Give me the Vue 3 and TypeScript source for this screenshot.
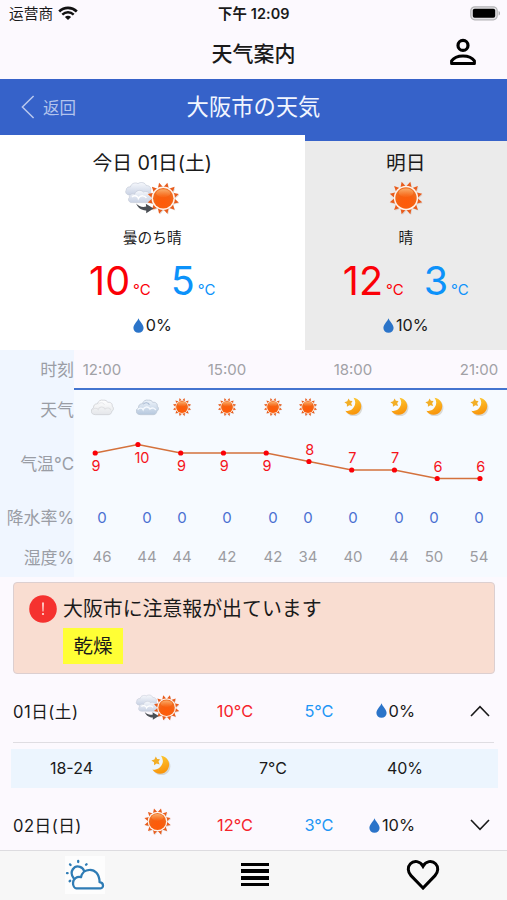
<script setup lang="ts">
type IconName = 'sun' | 'moon' | 'cloud' | 'overcast' | 'cloud-sun'

interface DaySummary {
  id: string
  title: string
  icon: IconName
  condition: string
  high: number
  low: number
  rain: string
}

interface HourSlot {
  icon: IconName
  rain: number
  humidity: number
  time?: string
}

interface TempPoint {
  x: number
  y: number
  value: number
  labelX: number
  labelY: number
}

interface DayRow {
  date: string
  icon: IconName
  high: string
  low: string
  rain: string
  open: boolean
  parts: { range: string; icon: IconName; temp: string; humidity: string }[]
}

const boxes: Record<IconName, string> = {
  sun: '0 0 36 36',
  moon: '0 0 20 20',
  cloud: '0 0 26 20',
  overcast: '0 0 26 20',
  'cloud-sun': '0 0 58 36',
}

const days: DaySummary[] = [
  { id: 'today', title: '今日 01日(土)', icon: 'cloud-sun', condition: '曇のち晴', high: 10, low: 5, rain: '0%' },
  { id: 'tomorrow', title: '明日', icon: 'sun', condition: '晴', high: 12, low: 3, rain: '10%' },
]

const hours: HourSlot[] = [
  { time: '12:00', icon: 'cloud', rain: 0, humidity: 46 },
  { icon: 'overcast', rain: 0, humidity: 44 },
  { icon: 'sun', rain: 0, humidity: 44 },
  { time: '15:00', icon: 'sun', rain: 0, humidity: 42 },
  { icon: 'sun', rain: 0, humidity: 42 },
  { icon: 'sun', rain: 0, humidity: 34 },
  { time: '18:00', icon: 'moon', rain: 0, humidity: 40 },
  { icon: 'moon', rain: 0, humidity: 44 },
  { icon: 'moon', rain: 0, humidity: 50 },
  { time: '21:00', icon: 'moon', rain: 0, humidity: 54 },
]

const temps = [9, 10, 9, 9, 9, 8, 7, 7, 6, 6]

// A label sits under its point while the curve is high and over it once it falls.
const points: TempPoint[] = temps.map((value, i) => {
  const x = 21.2 + i * 42.75
  const y = 23 + (9 - value) * 8.5
  return { x, y, value, labelX: x + (value === 10 ? 4 : 0.7), labelY: value >= 9 ? y + 18.3 : y - 7 }
})
const line = points.map((p) => `${p.x},${p.y}`).join(' ')

const rows: DayRow[] = [
  {
    date: '01日(土)',
    icon: 'cloud-sun',
    high: '10°C',
    low: '5°C',
    rain: '0%',
    open: true,
    parts: [{ range: '18-24', icon: 'moon', temp: '7°C', humidity: '40%' }],
  },
  { date: '02日(日)', icon: 'sun', high: '12°C', low: '3°C', rain: '10%', open: false, parts: [] },
]

const rays = Array.from({ length: 12 }, (_, i) => i * 30)
</script>

<template>
  <div class="screen">
    <svg class="sprite" aria-hidden="true">
      <defs>
        <radialGradient id="sun-fill" cx="0.5" cy="0.72" r="0.62">
          <stop offset="0" stop-color="#ff5a08" />
          <stop offset="0.6" stop-color="#f76010" />
          <stop offset="1" stop-color="#ef6f24" />
        </radialGradient>
        <linearGradient id="sun-gloss" x1="0" y1="0" x2="0" y2="1">
          <stop offset="0" stop-color="#ffc080" stop-opacity="0.75" />
          <stop offset="1" stop-color="#ff9a50" stop-opacity="0.1" />
        </linearGradient>
        <linearGradient id="moon-fill" x1="0" y1="0" x2="0.3" y2="1">
          <stop offset="0" stop-color="#fdd037" />
          <stop offset="1" stop-color="#f9960c" />
        </linearGradient>
        <linearGradient id="cloud-fill" x1="0" y1="0" x2="0" y2="1">
          <stop offset="0" stop-color="#ffffff" />
          <stop offset="1" stop-color="#e4e6ea" />
        </linearGradient>
        <linearGradient id="overcast-fill" x1="0" y1="0" x2="0" y2="1">
          <stop offset="0" stop-color="#eef4fb" />
          <stop offset="1" stop-color="#b6c8de" />
        </linearGradient>
        <linearGradient id="puff-fill" x1="0" y1="0" x2="0" y2="1">
          <stop offset="0" stop-color="#f6f8fc" />
          <stop offset="1" stop-color="#c9d2e4" />
        </linearGradient>
      </defs>
      <symbol id="sun" viewBox="0 0 36 36">
        <g fill="#c9bfba" opacity="0.55" transform="translate(0.9 1.1)">
          <path v-for="a in rays" :key="a" d="M18 1.6 20.6 7.2 15.4 7.2Z" :transform="`rotate(${a + 15} 18 18)`" />
        </g>
        <circle cx="18.4" cy="18.5" r="12.5" fill="#dccfc8" opacity="0.7" />
        <path v-for="a in rays" :key="a" d="M18 1.2 20.9 7 15.1 7Z" fill="#e85c1c" :transform="`rotate(${a + 15} 18 18)`" />
        <circle cx="18" cy="18" r="12.2" fill="#fff3ea" />
        <circle cx="18" cy="18" r="10.7" fill="url(#sun-fill)" />
        <ellipse cx="18" cy="12.8" rx="7.4" ry="4.2" fill="url(#sun-gloss)" />
      </symbol>
      <symbol id="moon" viewBox="0 0 20 20">
        <path d="M10.8 1.6A9 9 0 1 1 2.2 14.7 8.6 8.6 0 0 0 10.8 1.6Z" fill="#b9b3a6" opacity="0.45" transform="translate(0.2 0.7)" />
        <path d="M10 0.8A9 9 0 1 1 1.4 14.4 8.6 8.6 0 0 0 10 0.8Z" fill="url(#moon-fill)" />
        <path d="M4.8 1.5 6.2 4 9 4.2 7.5 6.6 8.6 9.4 5.6 8.6 3.1 10.3 3 7.3 0.4 5.6 3.4 4.5Z" fill="#f2ae26" />
      </symbol>
      <symbol id="cloud" viewBox="0 0 26 20">
        <path d="M5.4 17.5C2.4 17.5 1 15.6 1.4 13.9 1.2 12 2.4 10.8 3.6 10.4 3.2 7.6 5.4 5.8 7.6 6.2 8.4 3.2 11 1.6 13.8 2.3 16.4 2 18 3.2 18.5 4.6 21.4 4 23.8 6 23.2 8.6 25.3 10.4 24.7 13 22.9 13.7 22.7 16.4 20.9 17.6 19 17.5Z" fill="url(#cloud-fill)" stroke="#d3d5d9" stroke-width="1" />
        <path d="M2.6 12.2C4.8 9.8 7.6 10.6 8.4 12.2 9.6 8.8 14 8.4 15.6 11.6 18 9.6 21 10.6 21.6 12.8" fill="none" stroke="#dfe0e3" stroke-width="1.1" />
        <path d="M8.5 6.6C10.4 4.2 14 4.6 15 7.2" fill="none" stroke="#e2e3e6" stroke-width="0.9" />
      </symbol>
      <symbol id="overcast" viewBox="0 0 26 20">
        <path d="M5.4 17.5C2.4 17.5 1 15.6 1.4 13.9 1.2 12 2.4 10.8 3.6 10.4 3.2 7.6 5.4 5.8 7.6 6.2 8.4 3.2 11 1.6 13.8 2.3 16.4 2 18 3.2 18.5 4.6 21.4 4 23.8 6 23.2 8.6 25.3 10.4 24.7 13 22.9 13.7 22.7 16.4 20.9 17.6 19 17.5Z" fill="url(#overcast-fill)" stroke="#c0cad8" stroke-width="1" />
        <path d="M2.6 12.2C4.8 9.8 7.6 10.6 8.4 12.2 9.6 8.8 14 8.4 15.6 11.6 18 9.6 21 10.6 21.6 12.8" fill="none" stroke="#f5f9fe" stroke-width="1.5" />
        <path d="M8.5 6.6C10.4 4.2 14 4.6 15 7.2" fill="none" stroke="#a9bad2" stroke-width="1.2" />
      </symbol>
      <symbol id="cloud-sun" viewBox="0 0 58 36">
        <g stroke="#c6ccd8" stroke-width="0.7">
          <path d="M8 14C4.4 14 3 11 4.4 9.2 4.4 6.6 6.8 5.4 8.6 6 9.2 2.6 13.2 1 16.2 2.6 19 0.6 23.4 1.4 24.4 4.6 28 4.2 30 7.4 28.6 10 30 12.4 28 14.4 26 14Z" fill="url(#puff-fill)" transform="translate(-1.2 1)" />
          <path d="M9.6 22.6C5.8 22.8 4.4 19.4 6.4 17.4 6 14.4 9.4 13 11.6 14.2 12.4 10.4 17.8 9 20.4 12 23.6 10.6 27 12.4 27 15.4 30.4 15.6 31.6 22.4 27 22.6Z" fill="url(#puff-fill)" />
          <path d="M9 16.8C12 14.6 15 16.4 15.4 18.4 17.4 14.8 22 15.4 23.4 18" fill="none" stroke="#ffffff" stroke-width="1.5" />
        </g>
        <use href="#sun" x="23" y="1" width="34.5" height="34.5" />
        <path d="M13.2 23.6C16 26.8 19.6 27.4 23.2 26.6L22.8 23.8 30.6 28.4 23.2 33.2 23.2 30.4C18.4 30.6 14.8 27.8 13.2 23.6Z" fill="#4a4e54" />
      </symbol>
      <symbol id="drop" viewBox="0 0 11 15">
        <path d="M5.5 0.3C6.6 3.6 10.6 6.6 10.6 10A5.1 4.8 0 0 1 0.4 10C0.4 6.6 4.4 3.6 5.5 0.3Z" fill="#2b74c9" />
      </symbol>
    </svg>

    <div class="status">
      <span class="carrier">运营商</span>
      <svg class="wifi" viewBox="0 0 20 15">
        <path d="M1.2 5.4C6.2 0.7 13.8 0.7 18.8 5.4" fill="none" stroke="#111" stroke-width="2.7" />
        <path d="M4.3 8.6C7.6 5.6 12.4 5.6 15.7 8.6" fill="none" stroke="#111" stroke-width="2.5" />
        <path d="M10 14 6.9 10.9C8.7 9.4 11.3 9.4 13.1 10.9Z" fill="#111" />
      </svg>
      <span class="clock">下午 12:09</span>
      <svg class="battery" viewBox="0 0 31 15">
        <rect x="0.8" y="0.8" width="26.4" height="13" rx="4" fill="#e4e3e6" stroke="#b4b4b6" stroke-width="1.2" />
        <rect x="2.8" y="2.8" width="22.4" height="9" rx="1.8" fill="#000" />
        <path d="M28.6 5C30.4 5.6 30.4 9 28.6 9.6Z" fill="#a8a8aa" />
      </svg>
    </div>

    <header class="nav">
      <h1>天气案内</h1>
      <svg class="person" viewBox="0 0 28 28">
        <circle cx="14" cy="7.4" r="5" fill="none" stroke="#000" stroke-width="3.2" />
        <path d="M2.6 25.6V22.8C4.6 19.8 9 17.9 14 17.9S23.4 19.8 25.4 22.8V25.6Z" fill="none" stroke="#000" stroke-width="3" stroke-linejoin="round" />
      </svg>
    </header>

    <div class="city">
      <div class="back">
        <svg viewBox="0 0 14 24"><path d="M12.6 1 1.4 12 12.6 23" fill="none" stroke="#b9c8ee" stroke-width="1.5" /></svg>
        <span>返回</span>
      </div>
      <h2>大阪市の天気</h2>
    </div>

    <section class="days">
      <article v-for="d in days" :key="d.id" class="day" :class="d.id">
        <div class="day-title">{{ d.title }}</div>
        <svg class="day-icon" :class="d.icon" :viewBox="boxes[d.icon]"><use :href="`#${d.icon}`" /></svg>
        <div class="condition">{{ d.condition }}</div>
        <div class="range">
          <span class="temp high">{{ d.high }}<small>°C</small></span>
          <span class="temp low">{{ d.low }}<small>°C</small></span>
        </div>
        <div class="rain"><svg class="drop" viewBox="0 0 11 15"><use href="#drop" /></svg>{{ d.rain }}</div>
      </article>
    </section>

    <section class="hourly">
      <div class="labels">
        <span>时刻</span><span>天气</span><span>气温°C</span><span>降水率%</span><span>湿度%</span>
      </div>
      <div class="table">
        <div class="slots times">
          <span v-for="(h, i) in hours" :key="i">{{ h.time }}</span>
        </div>
        <div class="slots icons">
          <svg v-for="(h, i) in hours" :key="i" :class="h.icon" :viewBox="boxes[h.icon]"><use :href="`#${h.icon}`" /></svg>
        </div>
        <svg class="chart" viewBox="0 0 433 68">
          <polyline :points="line" fill="none" stroke="#d4713c" stroke-width="1.5" />
          <g v-for="(p, i) in points" :key="i">
            <circle :cx="p.x" :cy="p.y" r="2.6" fill="#fb0007" />
            <text :x="p.labelX" :y="p.labelY" text-anchor="middle">{{ p.value }}</text>
          </g>
        </svg>
        <div class="slots rains">
          <span v-for="(h, i) in hours" :key="i">{{ h.rain }}</span>
        </div>
        <div class="slots humidity">
          <span v-for="(h, i) in hours" :key="i">{{ h.humidity }}</span>
        </div>
      </div>
    </section>

    <section class="alert">
      <svg class="warn" viewBox="0 0 28 28">
        <circle cx="14" cy="14" r="13.8" fill="#f5322f" />
        <path d="M13.1 7.6H14.9L14.5 16.4H13.5Z" fill="#ffe3dd" />
        <circle cx="14" cy="19" r="1.1" fill="#ffe3dd" />
      </svg>
      <div class="alert-body">
        <p>大阪市に注意報が出ています</p>
        <span class="tag">乾燥</span>
      </div>
    </section>

    <section class="list">
      <template v-for="r in rows" :key="r.date">
        <div class="row" :class="{ open: r.open }">
          <span class="date">{{ r.date }}</span>
          <svg class="row-icon" :class="r.icon" :viewBox="boxes[r.icon]"><use :href="`#${r.icon}`" /></svg>
          <span class="hi">{{ r.high }}</span>
          <span class="lo">{{ r.low }}</span>
          <span class="pct"><svg class="drop" viewBox="0 0 11 15"><use href="#drop" /></svg>{{ r.rain }}</span>
          <svg class="chevron" viewBox="0 0 20 12">
            <path :d="r.open ? 'M1 11 10 1.6 19 11' : 'M1 1 10 10.4 19 1'" fill="none" stroke="#1a1a1a" stroke-width="1.6" />
          </svg>
        </div>
        <div v-for="p in r.parts" :key="p.range" class="part">
          <span>{{ p.range }}</span>
          <svg class="moon" :viewBox="boxes[p.icon]"><use :href="`#${p.icon}`" /></svg>
          <span>{{ p.temp }}</span>
          <span>{{ p.humidity }}</span>
        </div>
      </template>
    </section>

    <nav class="tabs">
      <div class="tab">
        <svg class="tab-weather" viewBox="0 0 40 38">
          <g fill="none" stroke="#2f7cb5" stroke-width="2.3" stroke-linecap="round" stroke-linejoin="round">
            <path d="M11.2 32.4H35.4C39 32.2 39 26.6 34.6 26.2 34.4 17.8 29.8 13.6 24.6 13.8 19.8 13.8 16.8 17.2 16 21.2 12 20 8 23 8 27 8 30 9.6 32.2 11.2 32.4Z" />
            <path d="M8.6 22C3.6 15.6 9.4 8.8 15 10.8 17.2 11.6 18.6 13.2 19 14.8" />
            <path d="M13.2 5V6M5 8.4 5.6 9M2 17.2H2.6M4.6 25.2 5.2 24.8M21 8.8 21.6 8.2" />
          </g>
        </svg>
      </div>
      <div class="tab"><div class="bars"><i></i><i></i><i></i><i></i></div></div>
      <div class="tab">
        <svg class="heart" viewBox="0 0 34 32">
          <path d="M17 29 5 16.6C1.6 13 1.4 7.8 4.4 4.8 8 1 14.2 2 17 7.2 19.8 2 26 1 29.6 4.8 32.6 7.8 32.4 13 29 16.6Z" fill="none" stroke="#000" stroke-width="3" />
        </svg>
      </div>
    </nav>
  </div>
</template>

<style>
body {
  margin: 0;
}
</style>

<style scoped>
.screen {
  display: flex;
  flex-direction: column;
  width: 507px;
  height: 900px;
  overflow: hidden;
  background: #fcf9fe;
  color: #1a1a1a;
  font-family: Inter, 'Noto Sans CJK JP', sans-serif;
  font-size: 16px;
}
.screen > * {
  flex: none;
}
.sprite {
  display: block;
  width: 0;
  height: 0;
}
svg {
  display: block;
  flex: none;
}
.status {
  display: grid;
  grid-template-columns: 49px 160px 91px 1fr 31px;
  align-items: center;
  height: 27px;
  padding: 0 6px 0 9px;
  box-sizing: border-box;
  font-family: Inter, 'Noto Sans CJK SC', sans-serif;
  font-size: 14.7px;
  line-height: 20px;
}
.carrier {
  white-space: nowrap;
}
.wifi {
  width: 20px;
  height: 15px;
}
.clock {
  font-size: 14.4px;
  font-weight: 600;
  letter-spacing: 0.1px;
  white-space: nowrap;
}
.battery {
  grid-column: 5;
  width: 31px;
  height: 15px;
}
.nav {
  display: grid;
  grid-template-columns: 1fr auto 1fr;
  align-items: center;
  height: 52px;
  padding-bottom: 2px;
  box-sizing: border-box;
}
h1 {
  grid-column: 2;
  margin: 0;
  font-family: 'Noto Sans CJK SC', sans-serif;
  font-size: 21px;
  font-weight: 500;
  line-height: 30px;
}
.person {
  justify-self: end;
  width: 28px;
  height: 28px;
  margin-right: 30px;
}
.city {
  display: grid;
  grid-template-columns: 1fr auto 1fr;
  align-items: center;
  height: 56px;
  background: #3662c9;
}
.back {
  display: flex;
  align-items: center;
  gap: 8px;
  padding-left: 21px;
  color: #b3c4ed;
  font-family: 'Noto Sans CJK SC', sans-serif;
  font-size: 16.5px;
}
.back svg {
  width: 14px;
  height: 24px;
}
h2 {
  margin: 0;
  color: #f2f6ff;
  font-size: 22.3px;
  font-weight: 400;
  line-height: 32px;
}
.days {
  display: grid;
  grid-template-columns: 304.5px 1fr;
  height: 215px;
  background: #3662c9;
}
.day {
  display: flex;
  flex-direction: column;
  align-items: center;
  padding-top: 12px;
  background: #fff;
}
.tomorrow {
  margin-top: 6px;
  padding-top: 6px;
  background: #ebebeb;
}
.day-title {
  font-size: 19.8px;
  line-height: 33px;
}
.day-icon {
  height: 36px;
}
.day-icon.sun {
  width: 36px;
}
.day-icon.cloud-sun {
  width: 58px;
}
.condition {
  margin-top: 10px;
  font-size: 14.7px;
  line-height: 24px;
}
.range {
  display: flex;
  gap: 20px;
  height: 48px;
  margin-top: 7px;
  line-height: 48px;
}
.temp {
  font-size: 39.5px;
}
.temp small {
  margin-left: 3px;
  font-size: 15px;
}
.high {
  color: #fb0007;
}
.low {
  color: #0c92fa;
}
.rain {
  display: flex;
  align-items: center;
  gap: 2px;
  margin-top: 8px;
  font-size: 16.2px;
  line-height: 24px;
}
.drop {
  width: 11px;
  height: 15px;
}
.hourly {
  display: flex;
  height: 227px;
}
.labels {
  display: flex;
  flex-direction: column;
  align-items: flex-end;
  width: 74px;
  background: #f0f6ff;
  color: #9a9da5;
  font-family: Inter, 'Noto Sans CJK SC', sans-serif;
  font-size: 16.9px;
  white-space: nowrap;
}
.labels span {
  height: 40px;
  line-height: 40px;
}
.labels span:nth-child(3) {
  height: 68px;
  line-height: 68px;
}
.labels span:nth-child(n + 4) {
  height: 39.5px;
  line-height: 40px;
}
.table {
  width: 433px;
  background: #f6faff;
}
.slots {
  display: grid;
  grid-template-columns: 56px 34px 36px 54px 38px 32px 58px 34px 36px 54px;
  align-items: center;
  justify-items: center;
  font-size: 15px;
}
.times {
  height: 40px;
  border-bottom: 2px solid #4474cf;
  box-sizing: border-box;
  background: #fcf9fe;
  color: #a1a1a6;
}
.icons {
  height: 34px;
}
.icons .sun {
  width: 20px;
  height: 20px;
}
.icons .moon {
  width: 19px;
  height: 19px;
  margin-bottom: 1px;
}
.icons .cloud,
.icons .overcast {
  width: 25px;
  height: 19px;
}
.chart {
  width: 433px;
  height: 68px;
  margin-top: 6px;
}
.chart text {
  fill: #f5141b;
  font-size: 14.5px;
}
.rains {
  height: 39px;
  color: #4a6fd2;
}
.humidity {
  height: 38px;
  color: #9c9ca1;
}
.alert {
  display: flex;
  gap: 6px;
  height: 92px;
  margin: 5px 12px 0 13px;
  padding: 11px 0 0 15px;
  box-sizing: border-box;
  border: 1px solid #dccfd0;
  border-radius: 4px;
  background: #f9ddd1;
}
.warn {
  width: 28px;
  height: 28px;
  margin-top: 1px;
}
.alert-body p {
  margin: 0;
  font-size: 19.9px;
  line-height: 30px;
}
.tag {
  display: block;
  width: 60px;
  height: 36px;
  margin-top: 4px;
  background: #ffff35;
  font-size: 19.5px;
  line-height: 36px;
  text-align: center;
}
.list {
  flex: 1 1 0;
  min-height: 0;
  overflow: hidden;
}
.row {
  display: grid;
  grid-template-columns: 100px 88px 68px 100px 46px 1fr;
  align-items: center;
  height: 68px;
  margin: 0 13px;
  font-size: 16.4px;
}
.row.open {
  height: 69px;
  padding-top: 5px;
  box-sizing: border-box;
  border-bottom: 1px solid #dfdde2;
}
.row > * {
  justify-self: center;
}
.row .date {
  justify-self: start;
  font-size: 16.6px;
  letter-spacing: 0.5px;
}
.row .pct {
  display: flex;
  align-items: center;
  justify-self: end;
  gap: 2px;
}
.hi {
  color: #f5242b;
}
.lo {
  color: #1c96f5;
}
.row-icon {
  height: 29px;
  margin-bottom: 8px;
}
.row-icon.sun {
  width: 29px;
}
.row-icon.cloud-sun {
  width: 47px;
  margin-left: 1px;
  margin-bottom: 7px;
}
.chevron {
  width: 20px;
  height: 12px;
  justify-self: end;
  margin-right: 4px;
}
.part {
  display: grid;
  grid-template-columns: 121px 58px 166px 98px;
  align-items: center;
  justify-items: center;
  height: 39px;
  margin: 6px 9px 3px 11px;
  background: #ecf5fe;
}
.part svg {
  width: 20px;
  height: 20px;
  margin-bottom: 8px;
}
.part span {
  margin-bottom: 1px;
}
.tabs {
  display: grid;
  grid-template-columns: repeat(3, 1fr);
  height: 50px;
  box-sizing: border-box;
  border-top: 1px solid #dddce0;
  background: #f7f7f7;
}
.tab {
  display: flex;
  align-items: center;
  justify-content: center;
  padding-bottom: 2px;
}
.tab-weather {
  width: 40px;
  height: 38px;
  background: #fdfdfd;
}
.bars {
  display: grid;
  gap: 3px;
  width: 28px;
  margin-left: 3px;
}
.bars i {
  height: 3.6px;
  background: #000;
}
.heart {
  width: 34px;
  height: 32px;
}
</style>
